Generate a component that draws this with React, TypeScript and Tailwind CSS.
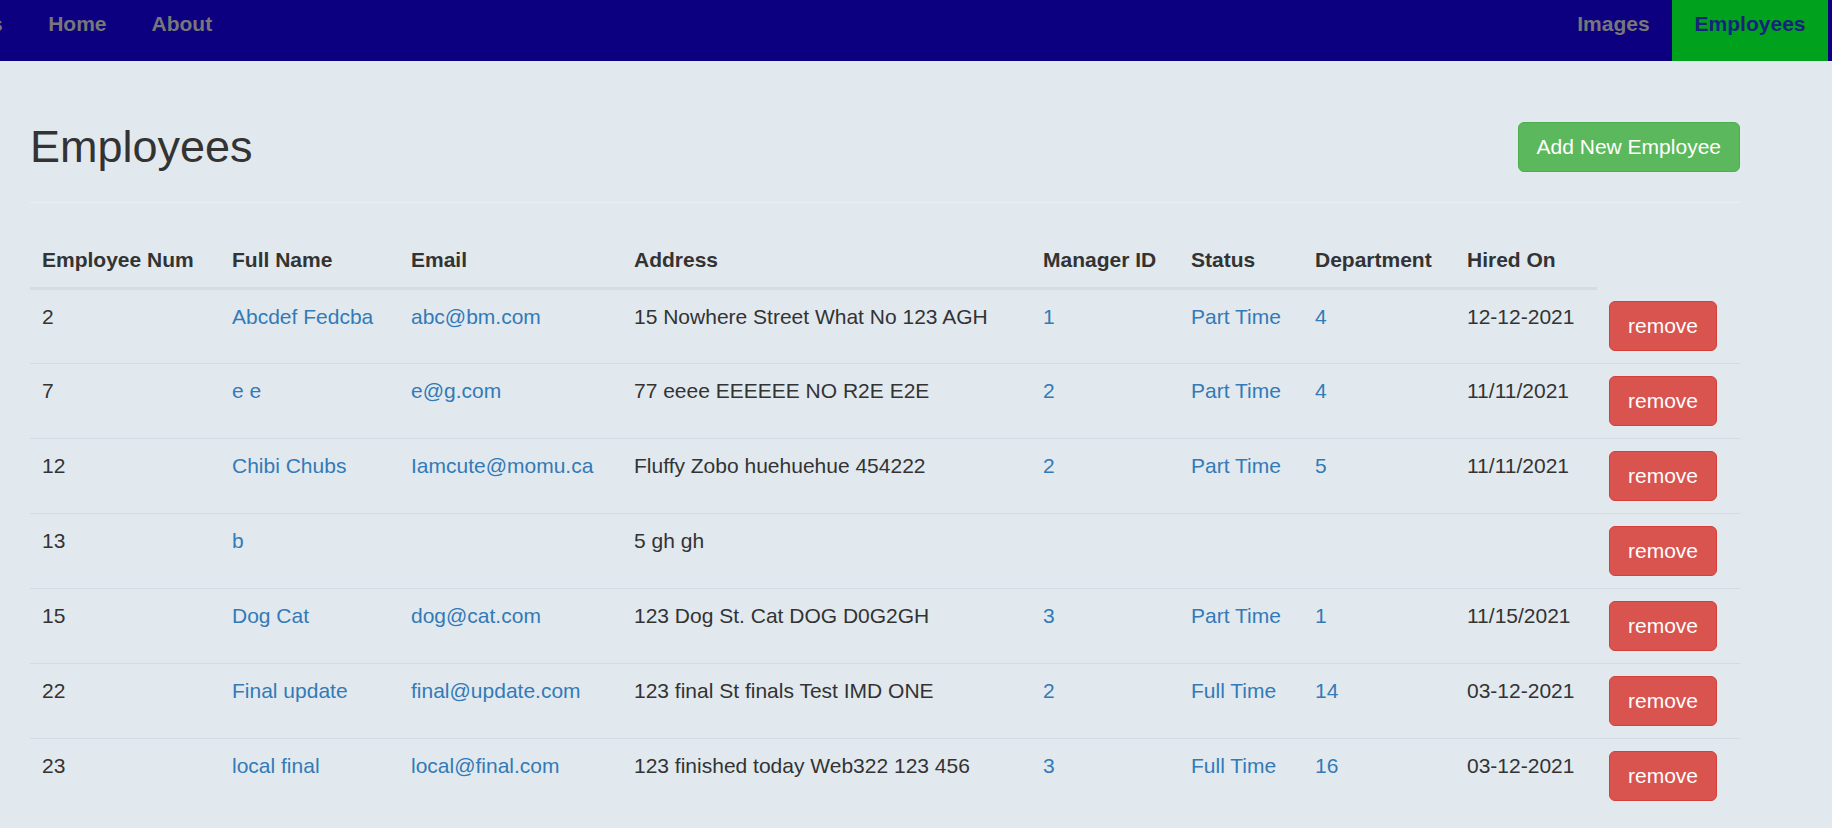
import React from "react";

type Row = {
  num: string;
  name: string;
  email: string;
  address: string;
  manager: string;
  status: string;
  dept: string;
  hired: string;
};

const rows: Row[] = [
  { num: "2", name: "Abcdef Fedcba", email: "abc@bm.com", address: "15 Nowhere Street What No 123 AGH", manager: "1", status: "Part Time", dept: "4", hired: "12-12-2021" },
  { num: "7", name: "e e", email: "e@g.com", address: "77 eeee EEEEEE NO R2E E2E", manager: "2", status: "Part Time", dept: "4", hired: "11/11/2021" },
  { num: "12", name: "Chibi Chubs", email: "Iamcute@momu.ca", address: "Fluffy Zobo huehuehue 454222", manager: "2", status: "Part Time", dept: "5", hired: "11/11/2021" },
  { num: "13", name: "b", email: "", address: "5 gh gh", manager: "", status: "", dept: "", hired: "" },
  { num: "15", name: "Dog Cat", email: "dog@cat.com", address: "123 Dog St. Cat DOG D0G2GH", manager: "3", status: "Part Time", dept: "1", hired: "11/15/2021" },
  { num: "22", name: "Final update", email: "final@update.com", address: "123 final St finals Test IMD ONE", manager: "2", status: "Full Time", dept: "14", hired: "03-12-2021" },
  { num: "23", name: "local final", email: "local@final.com", address: "123 finished today Web322 123 456", manager: "3", status: "Full Time", dept: "16", hired: "03-12-2021" },
];

const widths = [190, 179, 223, 409, 148, 124, 152, 142, 143];
const headers = ["Employee Num", "Full Name", "Email", "Address", "Manager ID", "Status", "Department", "Hired On"];

export default function App() {
  return (
    <div
      className="min-h-[828px] w-full bg-[#e1e9ef] text-[#333333]"
      style={{ fontFamily: '"Liberation Sans", Arial, Helvetica, sans-serif' }}
    >
      {/* Navbar */}
      <nav className="flex h-[61px] w-full overflow-hidden bg-[#0c0080] pr-[4px] text-[21px] font-bold leading-[30px]">
        <div className="flex">
          <span className="-ml-[9px] h-[61px] pt-[9px] text-[#777777]">s</span>
          <a className="ml-[23px] h-[61px] px-[22.5px] pt-[9px] text-[#777777]">Home</a>
          <a className="h-[61px] px-[22.5px] pt-[9px] text-[#777777]">About</a>
        </div>
        <div className="ml-auto flex">
          <a className="h-[61px] px-[22.5px] pt-[9px] text-[#777777]">Images</a>
          <a className="h-[61px] bg-[#00a11c] px-[22.5px] pt-[9px] text-[#15237f]">Employees</a>
        </div>
      </nav>

      {/* Content */}
      <div className="w-[1740px] pl-[30px] pt-[61px]">
        <div className="flex h-[50px] items-center justify-between">
          <h1 className="text-[45px] font-normal leading-[50px] text-[#333333]">Employees</h1>
          <button className="h-[50px] rounded-[6px] border border-[#4cae4c] bg-[#5cb85c] px-[18px] text-[21px] leading-[30px] text-white">
            Add New Employee
          </button>
        </div>
        <div className="h-[31px] border-b border-[#eaeff3]" />

        <table className="mt-[30px] w-[1710px] table-fixed border-collapse text-[21px] leading-[30px]">
          <colgroup>
            {widths.map((w, i) => (
              <col key={i} style={{ width: w }} />
            ))}
          </colgroup>
          <thead>
            <tr>
              {headers.map((h) => (
                <th
                  key={h}
                  className="border-b-[3px] border-[#d9dcdf] p-[12px] text-left align-bottom font-bold whitespace-nowrap"
                >
                  {h}
                </th>
              ))}
            </tr>
          </thead>
          <tbody>
            {rows.map((r, i) => (
              <tr key={r.num} className={i === 0 ? "" : "border-t border-[#d3dce2]"}>
                <td className="p-[12px] align-top">{r.num}</td>
                <td className="p-[12px] align-top text-[#337ab7] whitespace-nowrap">{r.name}</td>
                <td className="p-[12px] align-top text-[#337ab7] whitespace-nowrap">{r.email}</td>
                <td className="p-[12px] align-top whitespace-nowrap">{r.address}</td>
                <td className="p-[12px] align-top text-[#337ab7]">{r.manager}</td>
                <td className="p-[12px] align-top text-[#337ab7] whitespace-nowrap">{r.status}</td>
                <td className="p-[12px] align-top text-[#337ab7]">{r.dept}</td>
                <td className="p-[12px] align-top">{r.hired}</td>
                <td className="p-[12px] align-top">
                  <button className="h-[50px] rounded-[6px] border border-[#d43f3a] bg-[#d9534f] px-[18px] text-[21px] leading-[30px] text-white">
                    remove
                  </button>
                </td>
              </tr>
            ))}
          </tbody>
        </table>
      </div>
    </div>
  );
}
